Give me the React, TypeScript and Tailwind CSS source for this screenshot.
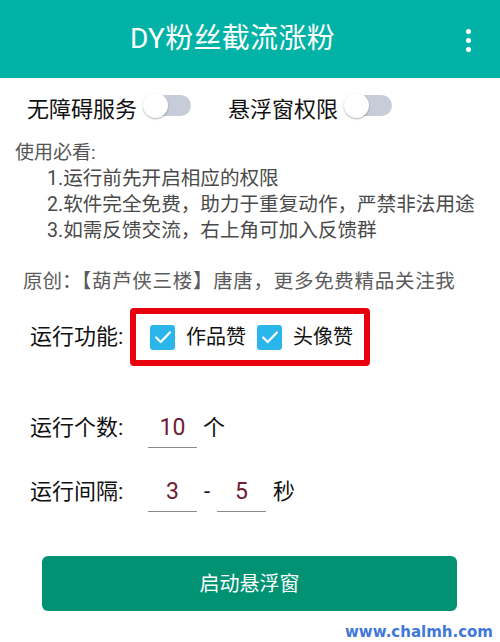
const FONT = "font-['Roboto','Noto_Sans_CJK_SC',sans-serif]";

function Toggle() {
  return (
    <span className="relative inline-block h-[26px] w-[48px] shrink-0">
      <span className="absolute left-[7px] right-0 top-[2px] h-[21px] rounded-full bg-[#c6cdd8]" />
      <span className="absolute left-0 top-0 h-[25px] w-[25px] rounded-full bg-white shadow-[0_1px_2px_rgba(0,0,0,0.3)]" />
    </span>
  );
}

function Check({ label }: { label: string }) {
  return (
    <span className="flex items-center gap-[11px]">
      <span className="flex h-[25px] w-[25px] items-center justify-center rounded-[3px] bg-[#2ab6ea]">
        <svg width="22" height="22" viewBox="0 0 24 24" fill="none" stroke="white" strokeWidth="2.4" strokeLinecap="round" strokeLinejoin="round">
          <path d="M4.5 12.5l5 5L19.5 7" />
        </svg>
      </span>
      <span className="text-[20px] leading-none text-[#111]">{label}</span>
    </span>
  );
}

function NumField({ value }: { value: string }) {
  return (
    <span className="flex h-[40px] w-[49px] items-center justify-center border-b-[1.5px] border-[#8a8a8a] text-[23px] leading-none text-[#6e1c36]">
      {value}
    </span>
  );
}

export default function App() {
  return (
    <div className={`h-[642px] w-[500px] overflow-hidden bg-white ${FONT}`}>
      <header className="flex h-[78px] items-center bg-[#02b2a6] text-white">
        <h1 className="ml-[130px] text-[28px] leading-none tracking-[0.3px]">DY粉丝截流涨粉</h1>
        <div className="ml-auto mr-[29px] flex flex-col items-center gap-[4px] pt-[2px]">
          <span className="h-[5px] w-[5px] rounded-full bg-white" />
          <span className="h-[5px] w-[5px] rounded-full bg-white" />
          <span className="h-[5px] w-[5px] rounded-full bg-white" />
        </div>
      </header>

      <div className="mt-[12px] flex h-[40px] items-center pl-[27px] text-[22px] text-[#111]">
        <span className="leading-none">无障碍服务</span>
        <span className="ml-[6px]"><Toggle /></span>
        <span className="ml-[37px] leading-none">悬浮窗权限</span>
        <span className="ml-[6px]"><Toggle /></span>
      </div>

      <div className="mt-[10px] pl-[15px] text-[19px] leading-[26px] text-[#555]">使用必看:</div>
      <ul className="pl-[47px] text-[19.6px] leading-[26px] text-[#4a4a4a]">
        <li>1.运行前先开启相应的权限</li>
        <li>2.软件完全免费，助力于重复动作，严禁非法用途</li>
        <li>3.如需反馈交流，右上角可加入反馈群</li>
      </ul>

      <div className="mt-[25px] pl-[23px] text-[19.5px] leading-[26px] text-[#5c5c5c]">
        原创：<span className="tracking-[0.7px]">【葫芦侠三楼】唐唐，更多免费精品关注我</span>
      </div>

      <div className="mt-[13px] flex items-center pl-[30px]">
        <span className="w-[100px] text-[22px] leading-none text-[#111]">运行功能:</span>
        <div className="flex h-[58px] w-[240px] items-center gap-[11px] rounded-[4px] border-[6px] border-[#e8000c] pl-[14px]">
          <Check label="作品赞" />
          <Check label="头像赞" />
        </div>
      </div>

      <div className="mt-[42px] flex h-[40px] items-center pl-[30px] text-[22px] text-[#111]">
        <span className="w-[118px] leading-none">运行个数:</span>
        <NumField value="10" />
        <span className="ml-[6px] leading-none">个</span>
      </div>

      <div className="mt-[24px] flex h-[40px] items-center pl-[30px] text-[22px] text-[#111]">
        <span className="w-[118px] leading-none">运行间隔:</span>
        <NumField value="3" />
        <span className="w-[20px] text-center leading-none">-</span>
        <NumField value="5" />
        <span className="ml-[7px] leading-none">秒</span>
      </div>

      <button className="mx-[42px] mt-[44px] flex h-[55px] w-[415px] items-center justify-center rounded-[6px] bg-[#009272] text-[20px] leading-none text-white">
        启动悬浮窗
      </button>

      <div className="mt-[10px] pr-[7px] text-right font-['DejaVu_Sans',sans-serif] text-[15px] font-bold leading-[22px] text-[#3f78d8]">
        www.chalmh.com
      </div>
    </div>
  );
}
